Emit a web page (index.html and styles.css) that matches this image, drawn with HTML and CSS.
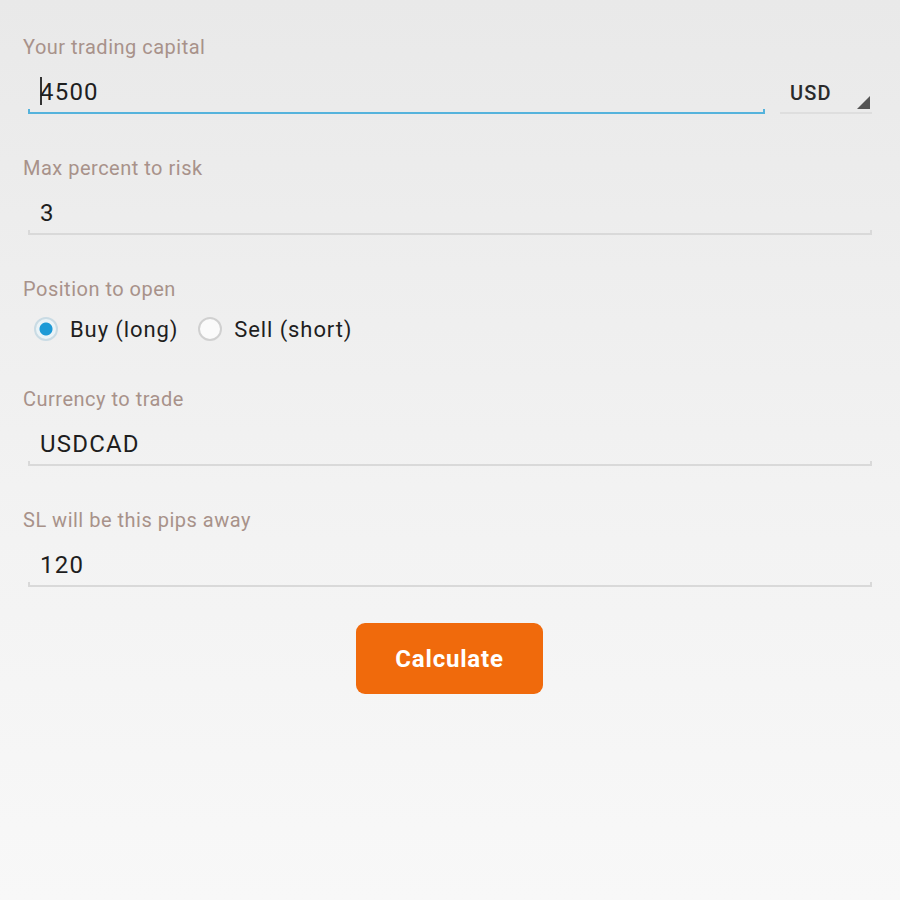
FILE: index.html
```html
<!DOCTYPE html>
<html lang="en">
<head>
  <meta charset="UTF-8">
  <meta name="viewport" content="width=device-width, initial-scale=1.0">
  <title>Position size calculator</title>
  <link rel="stylesheet" href="styles.css">
</head>
<body>
  <div class="form">
    <!-- capital -->
    <div class="field">
      <div class="label">Your trading capital</div>
      <div class="row">
        <div class="input focused"><span class="caret"></span>4500</div>
        <div class="select">USD<span class="corner"></span></div>
      </div>
    </div>

    <!-- risk -->
    <div class="field">
      <div class="label">Max percent to risk</div>
      <div class="input">3</div>
    </div>

    <!-- position -->
    <div class="field radio-field">
      <div class="label">Position to open</div>
      <div class="radios">
        <div class="radio checked"><span class="dot"></span>Buy (long)</div>
        <div class="radio"><span class="dot"></span>Sell (short)</div>
      </div>
    </div>

    <!-- pair -->
    <div class="field">
      <div class="label">Currency to trade</div>
      <div class="input">USDCAD</div>
    </div>

    <!-- stop loss -->
    <div class="field last">
      <div class="label">SL will be this pips away</div>
      <div class="input">120</div>
    </div>

    <div class="actions">
      <button class="btn">Calculate</button>
    </div>
  </div>
</body>
</html>
```
FILE: styles.css
```css
/* base */
html, body {
  height: 100%;
}

body {
  margin: 0;
  font-family: Roboto, "Liberation Sans", sans-serif;
  background: linear-gradient(#e9e9e9, #f3f3f3 60%, #f8f8f8);
}

.form {
  padding: 35px 28px 0 23px;
}

/* fields */
.field {
  margin-bottom: 42px;
}

.field.radio-field {
  margin-bottom: 44px;
}

.field.last {
  margin-bottom: 36px;
}

.label {
  font-size: 20px;
  line-height: 24px;
  letter-spacing: 0.5px;
  color: #a8928a;
}

.row {
  display: flex;
  align-items: flex-end;
  gap: 15px;
}

.input {
  position: relative;
  flex: 1;
  margin-left: 5px;
  padding: 18px 12px 5px;
  font-size: 24px;
  line-height: 30px;
  letter-spacing: 1.2px;
  color: #1e1e1e;
  border-bottom: 2px solid #d9d9d9;
}

.input::before,
.input::after {
  content: "";
  position: absolute;
  bottom: -2px;
  width: 2px;
  height: 5px;
  background: #d9d9d9;
}

.input::before { left: 0; }
.input::after { right: 0; }

.input.focused {
  border-bottom-color: #55b3dc;
}

.input.focused::before,
.input.focused::after {
  background: #55b3dc;
}

.caret {
  display: inline-block;
  width: 2px;
  height: 28px;
  margin-right: -2px;
  vertical-align: -5px;
  background: #333;
}

/* currency dropdown */
.select {
  position: relative;
  width: 82px;
  padding: 0 0 7px 10px;
  font-size: 20px;
  font-weight: 500;
  letter-spacing: 1.2px;
  color: #2a2a2a;
  border-bottom: 2px solid #dedede;
}

.corner {
  position: absolute;
  right: 2px;
  bottom: 3px;
  width: 0;
  height: 0;
  border-left: 13px solid transparent;
  border-bottom: 13px solid #555;
}

/* radios */
.radios {
  display: flex;
  gap: 20px;
  margin-top: 14px;
  padding-left: 11px;
  height: 28px;
  align-items: center;
}

.radio {
  display: flex;
  align-items: center;
  gap: 12px;
  font-size: 22px;
  letter-spacing: 0.9px;
  color: #1e1e1e;
}

.dot {
  box-sizing: border-box;
  width: 24px;
  height: 24px;
  border: 2px solid #d0d0d0;
  border-radius: 50%;
  background: #fafafa;
}

.radio.checked .dot {
  border-color: #c9dbe4;
  background: radial-gradient(circle, #1d9ad6 0 6px, #eaf3f7 7px);
}

/* button */
.actions {
  display: flex;
  justify-content: center;
  padding-left: 4px;
}

.btn {
  width: 187px;
  height: 71px;
  border: none;
  border-radius: 9px;
  background: #f06a0c;
  color: #fff;
  font-family: Roboto, "Liberation Sans", sans-serif;
  font-size: 24px;
  font-weight: bold;
  letter-spacing: 0.8px;
}
```
